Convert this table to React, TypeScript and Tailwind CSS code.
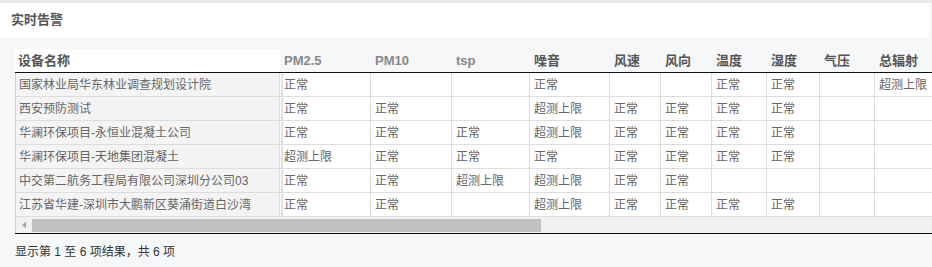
import React from "react";

const FONT = { fontFamily: '"Liberation Sans", "Noto Sans CJK SC", sans-serif' };

const widths = [91, 81, 78, 80, 51, 51, 55, 53, 55, 90];
const headers = ["PM2.5", "PM10", "tsp", "噪音", "风速", "风向", "温度", "湿度", "气压", "总辐射"];

const N = "正常";
const H = "超测上限";
const rows: { name: string; v: string[] }[] = [
  { name: "国家林业局华东林业调查规划设计院", v: [N, "", "", N, "", "", N, N, "", H] },
  { name: "西安预防测试", v: [N, N, "", H, N, N, N, N, "", ""] },
  { name: "华澜环保项目-永恒业混凝土公司", v: [N, N, N, H, N, N, N, N, "", ""] },
  { name: "华澜环保项目-天地集团混凝土", v: [H, N, N, N, N, N, N, N, "", ""] },
  { name: "中交第二航务工程局有限公司深圳分公司03", v: [N, N, H, H, N, N, "", "", "", ""] },
  { name: "江苏省华建-深圳市大鹏新区葵涌街道白沙湾", v: [N, N, "", H, N, N, N, N, "", ""] },
];

export default function App() {
  return (
    <div className="w-[932px] h-[267px] bg-[#f6f7f9] overflow-hidden" style={FONT}>
      <div className="h-[3px] bg-[#e8eaed]" />
      <div className="h-[34px] bg-white mr-[3px] flex items-center pl-[11px]">
        <span className="text-[13px] font-bold text-[#555]">实时告警</span>
      </div>
      <div className="pt-[12px] pl-[15px]">
        <div className="overflow-hidden w-[917px]">
          <div className="w-[1100px]">
            {/* header */}
            <div className="flex h-[23px] text-[13px] font-bold text-[#666]">
              <div className="w-[265px] shrink-0 bg-white flex items-center pl-[3px] text-[#555]">设备名称</div>
              {headers.map((h, i) => (
                <div
                  key={h}
                  className={`shrink-0 flex items-center pl-1 ${/[A-Za-z]/.test(h) ? "text-[#888]" : "text-[#555]"}`}
                  style={{ width: widths[i] }}
                >
                  {h}
                </div>
              ))}
            </div>
            <div className="h-px bg-[#111] w-[917px]" />
            {/* body */}
            {rows.map((r) => (
              <div key={r.name} className="flex h-[24px] border-b border-[#dddddd] text-[12px] text-[#666]">
                <div className="w-[265px] shrink-0 bg-[#f4f4f4] border-l border-l-[#cfcfcf] border-r border-r-[#dddddd] flex items-center pl-[3px] whitespace-nowrap">
                  {r.name}
                </div>
                {r.v.map((c, i) => (
                  <div
                    key={i}
                    className={`shrink-0 bg-white flex items-center pl-1 border-r border-r-[#dddddd] whitespace-nowrap ${
                      i === 0 ? "shadow-[inset_1px_0_0_#ffffff,inset_3px_0_0_#e2e2e2]" : ""
                    }`}
                    style={{ width: widths[i] }}
                  >
                    {c}
                  </div>
                ))}
              </div>
            ))}
          </div>
          {/* scrollbar */}
          <div className="h-[16px] bg-[#f1f1f1] border-l border-l-[#cfcfcf] flex items-center">
            <div className="w-[16px] h-full flex items-center justify-center">
              <svg width="6" height="8" viewBox="0 0 6 8">
                <path d="M5 0.5 L1 4 L5 7.5 Z" fill="#a3a3a3" />
              </svg>
            </div>
            <div className="w-[509px] h-[13px] bg-[#c1c1c1]" />
          </div>
          <div className="h-px bg-[#111]" />
        </div>
        <div className="h-[33px] pt-[3px] flex items-center text-[12px] text-[#333]">
          显示第 1 至 6 项结果，共 6 项
        </div>
      </div>
    </div>
  );
}
